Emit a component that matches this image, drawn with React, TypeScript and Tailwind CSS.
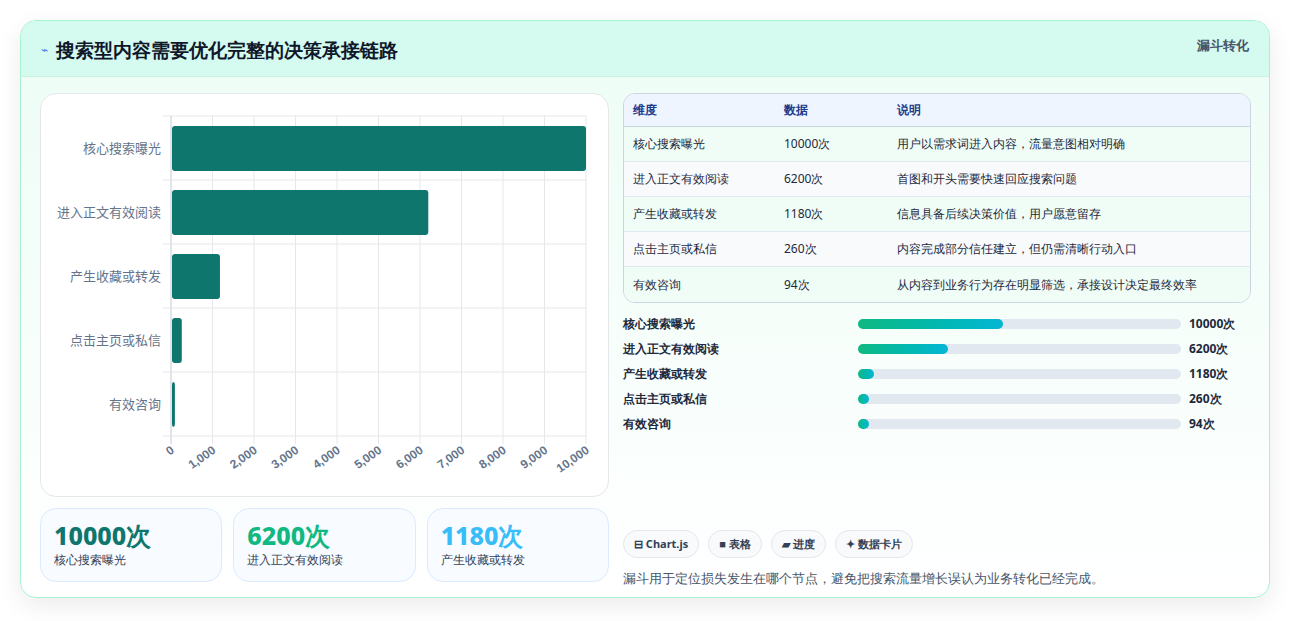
import React from 'react'

const rows = [
  { name: '核心搜索曝光', v: 10000, note: '用户以需求词进入内容，流量意图相对明确', p: 45 },
  { name: '进入正文有效阅读', v: 6200, note: '首图和开头需要快速回应搜索问题', p: 28 },
  { name: '产生收藏或转发', v: 1180, note: '信息具备后续决策价值，用户愿意留存', p: 5 },
  { name: '点击主页或私信', v: 260, note: '内容完成部分信任建立，但仍需清晰行动入口', p: 3 },
  { name: '有效咨询', v: 94, note: '从内容到业务行为存在明显筛选，承接设计决定最终效率', p: 3 },
]

function Chart() {
  const x0 = 130, x1 = 545, y0 = 22, step = 64
  const sx = (v: number) => x0 + ((x1 - x0) * v) / 10000
  return (
    <svg width="568" height="403" className="block">
      {Array.from({ length: 11 }).map((_, i) => (
        <line key={i} x1={sx(i * 1000)} x2={sx(i * 1000)} y1={y0} y2={y0 + step * 5 + 8} stroke="#e5e7eb" />
      ))}
      {Array.from({ length: 6 }).map((_, i) => (
        <line key={i} x1={x0 - 8} x2={x1} y1={y0 + i * step} y2={y0 + i * step} stroke="#e5e7eb" />
      ))}
      <line x1={x0} x2={x0} y1={y0} y2={y0 + step * 5 + 8} stroke="#d1d5db" />
      {rows.map((r, i) => (
        <g key={r.name}>
          <rect x={x0 + 1} y={y0 + i * step + 10} width={sx(r.v) - x0 - 1} height={45} rx={3} fill="#0f766e" />
          <text x={x0 - 10} y={y0 + i * step + 37} textAnchor="end" fontSize="13" fill="#64748b" fontFamily="'Noto Sans CJK SC', sans-serif">{r.name}</text>
        </g>
      ))}
      {Array.from({ length: 11 }).map((_, i) => (
        <text key={i} x={sx(i * 1000) + 4} y={358} textAnchor="end" fontSize="12" fontWeight="700" fill="#64748b" transform={`rotate(-35 ${sx(i * 1000) + 4} 358)`} fontFamily="'Liberation Sans', sans-serif">
          {(i * 1000).toLocaleString('en-US')}
        </text>
      ))}
    </svg>
  )
}

export default function App() {
  return (
    <div className="w-[1291px] h-[621px] bg-white pt-5 px-5 font-['Inter','Noto_Sans_CJK_SC',sans-serif]">
      <div className="w-[1250px] h-[578px] rounded-2xl border border-[#a7f3d0] bg-gradient-to-b from-[#ecfdf5] to-white shadow-[0_8px_24px_rgba(0,0,0,0.08)] overflow-hidden">
        <div className="h-[56px] bg-[#d5faef] border-b border-[#c8f1e4] flex items-start justify-between px-5 pt-[15px]">
          <div className="flex items-center gap-2">
            <span className="text-[#3b82f6] text-xs">⌁</span>
            <h1 className="text-[19px] font-bold text-[#0f172a]">搜索型内容需要优化完整的决策承接链路</h1>
          </div>
          <span className="text-[13px] font-bold text-[#475569]">漏斗转化</span>
        </div>
        <div className="flex gap-[14px] px-[19px] pt-[16px]">
          <div className="w-[569px] flex flex-col gap-[11px]">
            <div className="h-[404px] rounded-2xl border border-[#e5e7eb] bg-white">
              <Chart />
            </div>
            <div className="grid grid-cols-3 gap-[11px]">
              {[
                { v: '10000次', l: '核心搜索曝光', c: 'text-[#0f766e]' },
                { v: '6200次', l: '进入正文有效阅读', c: 'text-[#10b981]' },
                { v: '1180次', l: '产生收藏或转发', c: 'text-[#38bdf8]' },
              ].map((s) => (
                <div key={s.l} className="h-[74px] rounded-2xl border border-[#dbeafe] bg-[#f8fbff] px-[13px] pt-[10px]">
                  <div className={`text-[25px] font-extrabold leading-8 ${s.c}`}>{s.v}</div>
                  <div className="text-[12px] text-[#334155]">{s.l}</div>
                </div>
              ))}
            </div>
          </div>
          <div className="flex-1 flex flex-col">
            <div className="rounded-xl border border-[#cbd5e1] overflow-hidden text-[12px] text-[#1e293b] mr-[-1px]">
              <div className="flex h-[33px] items-center bg-[#eef5ff] font-bold text-[#1e3a8a] border-b border-[#cbd5e1]">
                <div className="w-[160px] pl-[9px]">维度</div>
                <div className="w-[113px]">数据</div>
                <div>说明</div>
              </div>
              {rows.map((r, i) => (
                <div key={r.name} className={`flex h-[35px] items-center ${i % 2 ? 'bg-[#f8fafc]' : 'bg-[#f0fdf6]'} ${i < 4 ? 'border-b border-[#e2e8f0]' : ''}`}>
                  <div className="w-[160px] pl-[9px] font-medium">{r.name}</div>
                  <div className="w-[113px]">{r.v}次</div>
                  <div>{r.note}</div>
                </div>
              ))}
            </div>
            <div className="flex flex-col gap-[7px] mt-[12px]">
              {rows.map((r) => (
                <div key={r.name} className="flex items-center h-[18px] text-[12px] font-bold text-[#1e293b]">
                  <div className="w-[235px]">{r.name}</div>
                  <div className="w-[323px] h-[10px] rounded-full bg-[#e2e8f0]">
                    <div className="h-full rounded-full bg-gradient-to-r from-[#10b981] to-[#06b6d4]" style={{ width: `${r.p}%`, minWidth: 11 }} />
                  </div>
                  <div className="ml-[8px]">{r.v}次</div>
                </div>
              ))}
            </div>
            <div className="mt-[97px] flex gap-[9px] text-[11px] font-bold text-[#334155]">
              {['⊟ Chart.js', '■ 表格', '▰ 进度', '✦ 数据卡片'].map((t) => (
                <span key={t} className="h-[28px] px-[10px] flex items-center rounded-full border border-[#e2e8f0] bg-[#f8fafc]">{t}</span>
              ))}
            </div>
            <p className="mt-[11px] text-[13px] text-[#475569] font-medium">漏斗用于定位损失发生在哪个节点，避免把搜索流量增长误认为业务转化已经完成。</p>
          </div>
        </div>
      </div>
    </div>
  )
}
